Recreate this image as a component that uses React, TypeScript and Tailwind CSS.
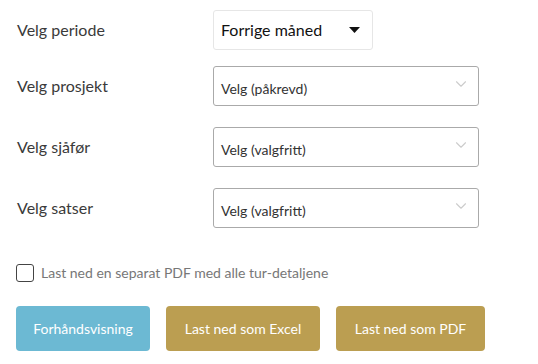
import { ChevronDown } from "lucide-react";

function Row({ label, children, className = "" }: { label: string; children: React.ReactNode; className?: string }) {
  return (
    <div className={`flex items-center ${className}`}>
      <div className="w-[197px] pl-[1px] text-[16px] font-normal text-[#3a3a3a]">{label}</div>
      {children}
    </div>
  );
}

function Picker({ text }: { text: string }) {
  return (
    <div className="flex h-[40px] w-[266px] items-center justify-between rounded-[3px] border border-[#aaaaaa] pl-[7px] pr-[8px]">
      <span className="mt-[4px] text-[14px] text-[#333]">{text}</span>
      <ChevronDown className="mb-[4px] h-[18px] w-[18px] text-[#cccccc]" strokeWidth={1.5} />
    </div>
  );
}

export default function App() {
  return (
    <div className="h-[364px] w-[538px] bg-white px-[16px] pt-[10px] font-['Lato',sans-serif]">
      <Row label="Velg periode">
        <div className="flex h-[40px] w-[160px] items-center justify-between rounded-[3px] border border-[#e6e6e6] pl-[7px] pr-[12px]">
          <span className="text-[16px] text-[#111]">Forrige måned</span>
          <svg width="11" height="6" viewBox="0 0 11 6">
            <path d="M0 0 H11 L5.5 6 Z" fill="#111" />
          </svg>
        </div>
      </Row>
      <Row label="Velg prosjekt" className="mt-[16px]">
        <Picker text="Velg (påkrevd)" />
      </Row>
      <Row label="Velg sjåfør" className="mt-[21px]">
        <Picker text="Velg (valgfritt)" />
      </Row>
      <Row label="Velg satser" className="mt-[21px]">
        <Picker text="Velg (valgfritt)" />
      </Row>
      <label className="mt-[34px] flex items-center gap-[7px]">
        <span className="h-[18px] w-[18px] rounded-[3px] border border-[#444]" />
        <span className="text-[14px] text-[#777]">Last ned en separat PDF med alle tur-detaljene</span>
      </label>
      <div className="mt-[23px] flex gap-[16px]">
        <button className="h-[45px] w-[134px] rounded-[4px] bg-[#6cb9d3] text-[14px] text-white">Forhåndsvisning</button>
        <button className="h-[45px] w-[154px] rounded-[4px] bg-[#bb9e51] text-[14px] text-white">Last ned som Excel</button>
        <button className="h-[45px] w-[149px] rounded-[4px] bg-[#bb9e51] text-[14px] text-white">Last ned som PDF</button>
      </div>
    </div>
  );
}
